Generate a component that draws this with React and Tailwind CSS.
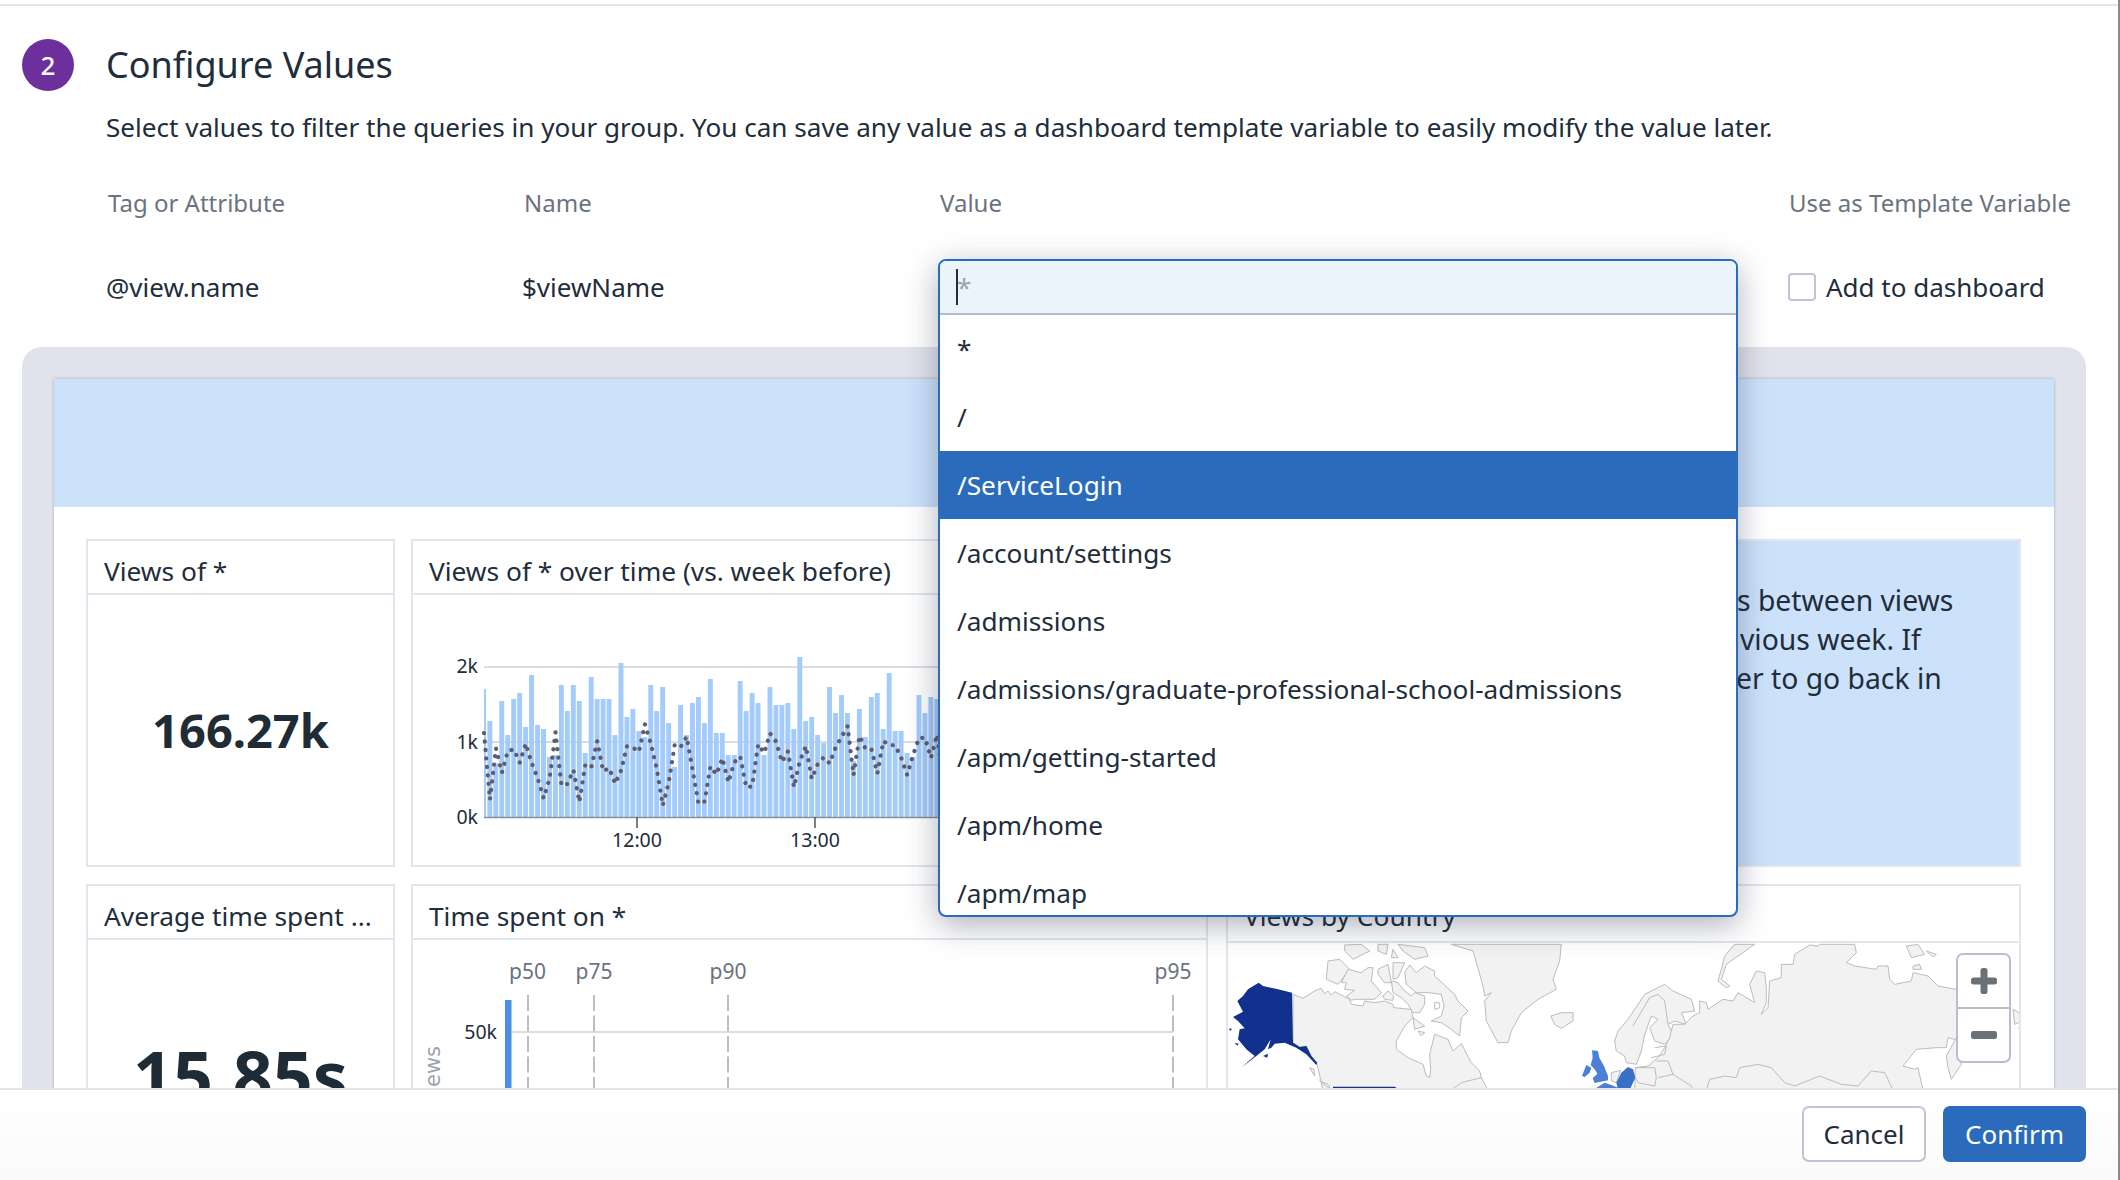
import React from 'react';

const options = [
  '*',
  '/',
  '/ServiceLogin',
  '/account/settings',
  '/admissions',
  '/admissions/graduate-professional-school-admissions',
  '/apm/getting-started',
  '/apm/home',
  '/apm/map',
];

// bar tops read off the reference, in px above the chart origin
const barTops = [
  363, 490, 303, 405, 297, 279, 381, 225, 375, 387, 471, 465, 255, 333, 255, 303, 459, 231, 297,
  297, 297, 405, 189, 351, 327, 393, 411, 255, 333, 261, 369, 501, 315, 405, 309, 291, 369, 237,
  399, 399, 465, 465, 243, 333, 279, 309, 465, 261, 315, 315, 309, 387, 171, 363, 351, 405, 429,
  261, 339, 285, 339, 483, 327, 411, 291, 279, 387, 219, 393, 393, 459, 471, 285, 339, 291, 297,
];

// noisy series, the dashes of the line end up as scattered dots like the reference
const dotPoints = Array.from({ length: 80 }, (_, i) => {
  const hash = Math.sin(i * 12.9898) * 43758.5453;
  const noise = hash - Math.floor(hash) - 0.5;
  return `${483 + i * 5.96},${764 + noise * 62 + Math.sin(i * 0.9) * 12}`;
}).join(' ');

const Card = ({ title, className = '', headerClass = 'h-[54px]', children }) => (
  <div className={`border-2 border-[#e2e5ed] bg-white h-[328px] flex flex-col overflow-hidden ${className}`}>
    <div className={`${headerClass} shrink-0 border-b-2 border-[#e2e5ed] px-[16px] pt-[12px] text-[26.3px] leading-[36px] whitespace-nowrap`}>
      {title}
    </div>
    <div className="relative flex-1 flex items-center justify-center overflow-hidden">{children}</div>
  </div>
);

const ViewsChart = () => (
  <svg viewBox="413 595 792 270" className="w-[792px] h-[270px] shrink-0">
    <g stroke="#dcdde3" strokeWidth="2">
      <line x1="483" x2="1205" y1="667" y2="667" />
      <line x1="483" x2="1205" y1="742" y2="742" />
    </g>
    <rect x="483" y="689" width="2" height="128" fill="#a3cbfb" />
    {barTops.map((top, i) => (
      <rect key={i} x={486.4 + i * 5.96} y={600 + top / 3} width="4.9" height={817 - 600 - top / 3} fill="#a3cbfb" />
    ))}
    <polyline
      points={dotPoints}
      fill="none"
      stroke="#5f5c6b"
      strokeWidth="4.2"
      strokeLinecap="round"
      strokeDasharray="0.1 8.4"
    />
    <line x1="483" x2="1205" y1="817.5" y2="817.5" stroke="#8b8f98" strokeWidth="1.5" />
    <line x1="636" x2="636" y1="817" y2="828" stroke="#555" strokeWidth="1.5" />
    <line x1="814" x2="814" y1="817" y2="828" stroke="#555" strokeWidth="1.5" />
    <g fill="#212d3a" fontSize="19.5" textAnchor="end">
      <text x="477" y="673">2k</text>
      <text x="477" y="749">1k</text>
      <text x="477" y="824">0k</text>
    </g>
    <g fill="#212d3a" fontSize="19.5" textAnchor="middle">
      <text x="636" y="847">12:00</text>
      <text x="814" y="847">13:00</text>
    </g>
  </svg>
);

const TimeChart = () => (
  <svg viewBox="413 940 792 272" className="w-[792px] h-[272px] shrink-0">
    <line x1="510" x2="1172" y1="1033" y2="1033" stroke="#dcdde3" strokeWidth="2" />
    <g stroke="#bcbdc2" strokeWidth="2" strokeDasharray="16 4.5">
      <line x1="527" x2="527" y1="996" y2="1200" />
      <line x1="593" x2="593" y1="996" y2="1200" />
      <line x1="727" x2="727" y1="996" y2="1200" />
      <line x1="1172" x2="1172" y1="996" y2="1200" />
    </g>
    <rect x="504" y="1001" width="6.5" height="200" fill="#4a90e2" />
    <g fill="#6b7280" fontSize="21" textAnchor="middle">
      <text x="526.5" y="980">p50</text>
      <text x="593" y="980">p75</text>
      <text x="727" y="980">p90</text>
      <text x="1172" y="980">p95</text>
    </g>
    <text x="496" y="1040" fill="#212d3a" fontSize="19.5" textAnchor="end">50k</text>
    <text
      transform="rotate(-90 439 1047)"
      x="439"
      y="1047"
      fill="#9ca3af"
      fontSize="21"
      fontFamily="'DejaVu Sans', sans-serif"
      textAnchor="end"
    >
      Views
    </text>
  </svg>
);

const land = [
  // canada
  '195,160 225,172 260,150 280,142 290,158 300,150 310,162 320,152 365,175 370,190 405,195 410,180 440,185 470,180 495,190 497,200 550,205 555,230 530,255 505,300 505,325 540,350 585,370 595,405 605,410 608,385 605,340 620,280 660,295 675,330 700,308 730,365 755,390 760,410 745,447 320,447 285,447 268,372 250,345 235,315 215,318 195,305',
  // arctic islands
  '300,60 335,55 365,85 330,130 295,115',
  '340,125 360,85 400,95 420,80 435,80 430,120 460,155 440,175 380,175 370,178 355,165 380,148 350,145 355,125',
  '450,85 480,70 490,125 470,125 450,100',
  '495,65 530,65 510,110 495,115',
  '465,165 480,150 497,165 495,178 470,175',
  '530,95 545,72 565,95 590,75 620,90 620,105 680,160 690,180 720,210 700,230 695,285 670,265 640,245 610,240 640,225 648,195 640,160 600,155 565,155 535,130',
  '490,120 510,125 530,150 550,165 560,155 590,165 590,190 575,215 555,215 540,190 520,170 495,155',
  '350,12 400,10 425,30 375,55 350,30',
  '450,10 480,10 475,40 450,30',
  '510,10 590,20 600,45 560,55 525,30',
  '495,25 510,50 490,50',
  '555,230 590,255 560,265',
  '570,270 590,275 580,285',
  '245,380 258,385 260,405',
  '275,420 300,430 310,447',
  '670,447 700,425 760,410 780,447',
  // greenland, iceland
  '670,10 1000,10 995,60 975,115 985,145 930,175 880,215 850,270 840,305 810,305 775,240 770,180 790,155 770,165 765,135 755,100 735,30',
  '968,225 1000,215 1035,215 1035,240 1000,262 980,250',
  // benelux
  '1150,395 1178,388 1165,425 1150,420',
  // scandinavia
  '1160,300 1170,270 1200,235 1250,160 1310,130 1335,150 1390,175 1400,210 1360,215 1375,250 1340,240 1320,250 1335,280 1310,310 1280,300 1265,260 1290,235 1270,225 1250,280 1240,330 1225,370 1195,365 1190,345 1165,330',
  // russia and the land south of it
  '1310,320 1325,290 1335,250 1360,250 1370,250 1395,225 1415,215 1415,180 1435,185 1440,205 1485,175 1515,180 1530,155 1580,185 1565,130 1585,90 1610,95 1615,140 1615,185 1600,220 1620,200 1625,120 1660,110 1660,70 1695,70 1700,40 1745,12 1770,15 1775,10 1880,10 1885,35 1855,65 1880,75 1945,85 1950,75 1980,75 1985,115 2000,130 2050,120 2055,95 2100,105 2130,135 2185,145 2200,300 2160,290 2155,320 2125,320 2065,325 2025,375 2060,385 2070,380 2085,447 1220,447 1222,380 1260,375 1290,350',
  // islands up north and east
  '2035,15 2070,10 2090,40 2050,50',
  '2095,30 2125,40 2115,48',
  '2055,75 2075,70 2080,85 2055,85',
  '1580,10 1520,10 1490,45 1480,85 1470,120 1495,140 1505,135 1480,115 1495,70',
  '2155,345 2185,290 2200,370 2170,415 2160,380',
  '2355,205 2380,220 2385,240 2360,250',
];

const borders = [
  '1215,255 1265,170 1290,160 1310,180 1320,250',
  '1222,380 1280,380 1285,410 1280,435 1230,425 1222,410',
  '1285,360 1320,360 1335,400 1290,410',
  '1270,350 1310,340 1315,315 1280,320',
  '1335,400 1390,435 1395,447',
  '1435,447 1445,415 1490,405 1525,410 1535,380 1590,370 1630,380 1670,425 1700,435 1775,405 1840,430 1890,435 1930,390 1970,395 1995,447',
];

const CountryMap = () => (
  <svg viewBox="0 6 2388 441" preserveAspectRatio="none" className="absolute left-0 top-0 w-[796px] h-[147px]">
    <g fill="#f2f2f2" stroke="#bcbcbc" strokeWidth="3">
      {land.map((points, i) => (
        <polygon key={i} points={points} />
      ))}
    </g>
    <polygon points="620,185 635,185 635,200 620,205" fill="#fff" stroke="#bcbcbc" strokeWidth="3" />
    <g fill="none" stroke="#bcbcbc" strokeWidth="3">
      {borders.map((points, i) => (
        <polyline key={i} points={points} />
      ))}
    </g>
    <g fill="#12318e">
      <polygon points="92,125 105,135 150,145 192,155 195,305 215,318 235,315 250,345 268,365 265,372 235,340 205,320 170,305 140,308 130,320 120,325 128,295 110,325 85,345 40,380 60,362 80,345 55,325 30,295 35,265 50,262 30,240 15,228 45,212 28,180 45,165 60,145" />
      <polygon points="105,345 120,338 118,350" />
      <polygon points="20,305 32,308 28,314" />
      <polygon points="3,262 12,264 6,270" />
      <polygon points="315,437 500,437 515,447 315,447" />
      <polygon points="2372,258 2385,262 2374,268" />
    </g>
    <g fill="#4a80d8">
      <polygon points="1062,405 1075,372 1090,380 1085,395 1070,408" />
      <polygon points="1092,328 1110,330 1114,350 1128,375 1140,405 1140,418 1100,426 1094,412 1108,398 1100,385 1088,372 1094,350" />
      <polygon points="1095,447 1130,425 1150,432 1170,440 1170,447" />
    </g>
    <polygon points="1200,378 1215,385 1222,410 1215,425 1205,447 1170,447 1165,425 1180,395" fill="#3a6fc8" />
  </svg>
);

const ZoomControls = () => (
  <div className="absolute left-[728px] top-[10px] w-[55px] h-[110px] flex flex-col rounded-[7px] border-2 border-[#b9bdd0] bg-white">
    <button className="flex-1 flex items-center justify-center border-b-2 border-[#b9bdd0]">
      <svg width="26" height="26" viewBox="0 0 26 26" fill="#6a7278">
        <rect x="0" y="9.5" width="26" height="7" rx="2.5" />
        <rect x="9.5" y="0" width="7" height="26" rx="2.5" />
      </svg>
    </button>
    <button className="flex-1 flex items-center justify-center">
      <svg width="26" height="8" viewBox="0 0 26 8" fill="#6a7278">
        <rect x="0" y="0" width="26" height="8" rx="2.5" />
      </svg>
    </button>
  </div>
);

const ValueDropdown = () => (
  <div className="absolute left-[938px] top-[259px] z-10 w-[800px] h-[658px] overflow-hidden rounded-[8px] border-2 border-[#2a6bbb] bg-white shadow-[0_8px_32px_rgba(30,40,70,0.36)]">
    <div className="h-[54px] border-b-2 border-[#b5bad0] bg-[#ebf4fb] pl-[16px] flex items-center">
      <div className="w-[2px] h-[36px] bg-[#212d3a] -mr-[2px]" />
      <span className="text-[#9aa3ab] text-[26px] pl-[1px]">*</span>
    </div>
    {options.map((option) => (
      <div
        key={option}
        className={`h-[68px] shrink-0 pl-[17px] pt-[2px] flex items-center text-[26.2px] whitespace-nowrap ${
          option === '/ServiceLogin' ? 'bg-[#2a6bbb] text-white' : ''
        }`}
      >
        {option}
      </div>
    ))}
  </div>
);

export default function App() {
  return (
    <div className="relative w-[2120px] h-[1180px] overflow-hidden flex flex-col bg-white border-r-2 border-[#8a8a8a] pt-[4px] text-[#212d3a] font-['Noto_Sans',sans-serif]">
      <div className="border-t-2 border-[#e2e5ed] h-[343px] shrink-0">
        <div className="flex items-center pl-[22px] pt-[33px]">
          <div className="w-[52px] h-[52px] rounded-full bg-[#6c2f9c] text-white flex items-center justify-center text-[26px] font-medium">
            2
          </div>
          <h1 className="ml-[32px] text-[36px] leading-[52px]">Configure Values</h1>
        </div>
        <p className="pl-[106px] mt-[18px] text-[26.1px] leading-[36px] whitespace-nowrap">
          Select values to filter the queries in your group. You can save any value as a dashboard template variable to
          easily modify the value later.
        </p>
        <div className="mt-[40px] grid grid-cols-[416px_416px_849px_1fr] pl-[108px] text-[24px] leading-[36px] text-[#6b7380]">
          <div>Tag or Attribute</div>
          <div>Name</div>
          <div>Value</div>
          <div className="whitespace-nowrap">Use as Template Variable</div>
        </div>
        <div className="mt-[48px] grid grid-cols-[417px_416px_849px_1fr] pl-[106px] text-[26px] leading-[36px]">
          <div>@view.name</div>
          <div className="-ml-[1px]">$viewName</div>
          <div />
          <label className="flex items-center whitespace-nowrap">
            <span className="w-[28px] h-[28px] mr-[10px] rounded-[4px] border-2 border-[#c0c4d4] bg-white" />
            Add to dashboard
          </label>
        </div>
      </div>

      <div className="flex-1 min-h-0 overflow-hidden px-[22px] pr-[32px]">
        <div className="rounded-t-[20px] bg-[#e0e3eb] px-[32px] pt-[32px]">
          <div className="bg-white shadow-[0_0_3px_rgba(0,0,0,0.25)]">
            <div className="h-[128px] bg-[#cce2fb]" />
            <div className="grid grid-cols-[309px_797px_797px] gap-x-[16px] gap-y-[17px] pl-[32px] pt-[32px] pb-[32px]">
              <Card title="Views of *">
                <span className="text-[47px] font-bold text-[#1f2c35]">166.27k</span>
              </Card>
              <Card title="Views of * over time (vs. week before)">
                <ViewsChart />
              </Card>
              <div className="ml-[2px] h-[328px] border-2 border-[#e2e5ed] bg-[#cce2fb] pl-[509px] pt-[40px] text-[28.3px] leading-[39px] whitespace-nowrap">
                <div>s between views</div>
                <div className="ml-[3px]">vious week. If</div>
                <div className="-ml-[1px]">er to go back in</div>
              </div>
              <Card title="Average time spent ...">
                <span className="text-[70px] font-bold text-[#1f2c35]">15.85s</span>
              </Card>
              <Card title="Time spent on *">
                <TimeChart />
              </Card>
              <Card title="Views by Country" className="ml-[2px]" headerClass="h-[57px]">
                <div className="absolute inset-0">
                  <CountryMap />
                  <ZoomControls />
                </div>
              </Card>
            </div>
          </div>
        </div>
      </div>

      <div className="h-[92px] shrink-0 border-t-2 border-[#e2e5ed] bg-gradient-to-b from-white to-[#fafafa] flex items-start justify-end gap-[17px] pt-[16px] pr-[32px] text-[26px]">
        <button className="w-[124px] h-[56px] rounded-[7px] border-2 border-[#bfc3d4] bg-white">Cancel</button>
        <button className="w-[143px] h-[56px] rounded-[7px] bg-[#2a6bbb] text-white">Confirm</button>
      </div>

      <ValueDropdown />
    </div>
  );
}
